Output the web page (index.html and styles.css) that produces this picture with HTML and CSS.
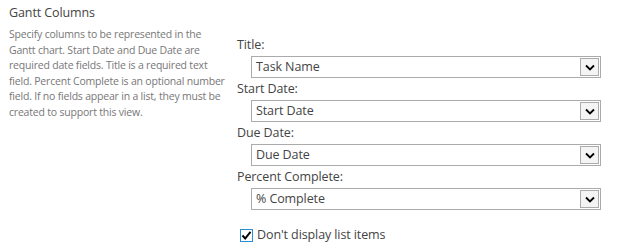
FILE: index.html
```html
<!DOCTYPE html>
<html lang="en">
<head>
    <meta charset="UTF-8">
    <title>Gantt Columns</title>
    <link rel="stylesheet" href="styles.css">
</head>
<body>

<div class="section flex">
    <div class="description">
        <div class="heading">Gantt Columns</div>
        <div class="text">
            Specify columns to be represented in the<br>
            Gantt chart. Start Date and Due Date are<br>
            required date fields. Title is a required text<br>
            field. Percent Complete is an optional number<br>
            field. If no fields appear in a list, they must be<br>
            created to support this view.
        </div>
    </div>

    <div class="fields">
        <div class="field">
            <div class="label">Title:</div>
            <div class="select">
                <span class="value">Task Name</span>
                <span class="arrow"><svg width="10" height="7" viewBox="0 0 10 7"><path d="M1 1.5 L5 5.5 L9 1.5" fill="none" stroke="#000" stroke-width="1.8"/></svg></span>
            </div>
        </div>
        <div class="field">
            <div class="label">Start Date:</div>
            <div class="select">
                <span class="value">Start Date</span>
                <span class="arrow"><svg width="10" height="7" viewBox="0 0 10 7"><path d="M1 1.5 L5 5.5 L9 1.5" fill="none" stroke="#000" stroke-width="1.8"/></svg></span>
            </div>
        </div>
        <div class="field">
            <div class="label">Due Date:</div>
            <div class="select">
                <span class="value">Due Date</span>
                <span class="arrow"><svg width="10" height="7" viewBox="0 0 10 7"><path d="M1 1.5 L5 5.5 L9 1.5" fill="none" stroke="#000" stroke-width="1.8"/></svg></span>
            </div>
        </div>
        <div class="field">
            <div class="label">Percent Complete:</div>
            <div class="select">
                <span class="value">% Complete</span>
                <span class="arrow"><svg width="10" height="7" viewBox="0 0 10 7"><path d="M1 1.5 L5 5.5 L9 1.5" fill="none" stroke="#000" stroke-width="1.8"/></svg></span>
            </div>
        </div>

        <label class="checkbox flex align-center">
            <span class="box"><svg width="11" height="11" viewBox="0 0 11 11"><path d="M1.5 5.5 L4.2 8.5 L9.5 1.8" fill="none" stroke="#000" stroke-width="2"/></svg></span>
            Don't display list items
        </label>
    </div>
</div>

</body>
</html>
```

FILE: styles.css
```css
* {
    font-family: "Segoe UI", "Open Sans", sans-serif;
    box-sizing: border-box;
}

body {
    background-color: #fff;
    margin: 0;
    font-size: 12.5px;
    letter-spacing: -0.1px;
    color: #444;
}

.flex {
    display: flex;
}

.align-center {
    align-items: center;
}

.section {
    padding: 4px 0 0 9px;
}

.description {
    width: 228px;
}

.heading {
    line-height: 18px;
    color: #444;
}

.text {
    margin-top: 5px;
    font-size: 10.5px;
    letter-spacing: -0.2px;
    line-height: 15.5px;
    color: #777;
    white-space: nowrap;
}

.fields {
    padding-top: 31px;
}

.field {
    margin-bottom: 1px;
}

.label {
    line-height: 19px;
    margin-bottom: 2px;
}

.select {
    display: flex;
    margin-left: 14px;
    width: 350px;
    height: 22px;
    border: 1px solid #ababab;
    background: #fff;
}

.value {
    flex: 1;
    padding-left: 4px;
    line-height: 20px;
}

.arrow {
    display: flex;
    align-items: center;
    justify-content: center;
    width: 19px;
    margin: 1px;
    border: 1px solid #ababab;
    background: #f4f4f4;
}

.checkbox {
    margin: 16px 0 0 3px;
    line-height: 18px;
}

.box {
    display: flex;
    align-items: center;
    justify-content: center;
    width: 13px;
    height: 13px;
    margin-right: 4px;
    border: 1px solid #2a8dd4;
    background: #fff;
}
```
